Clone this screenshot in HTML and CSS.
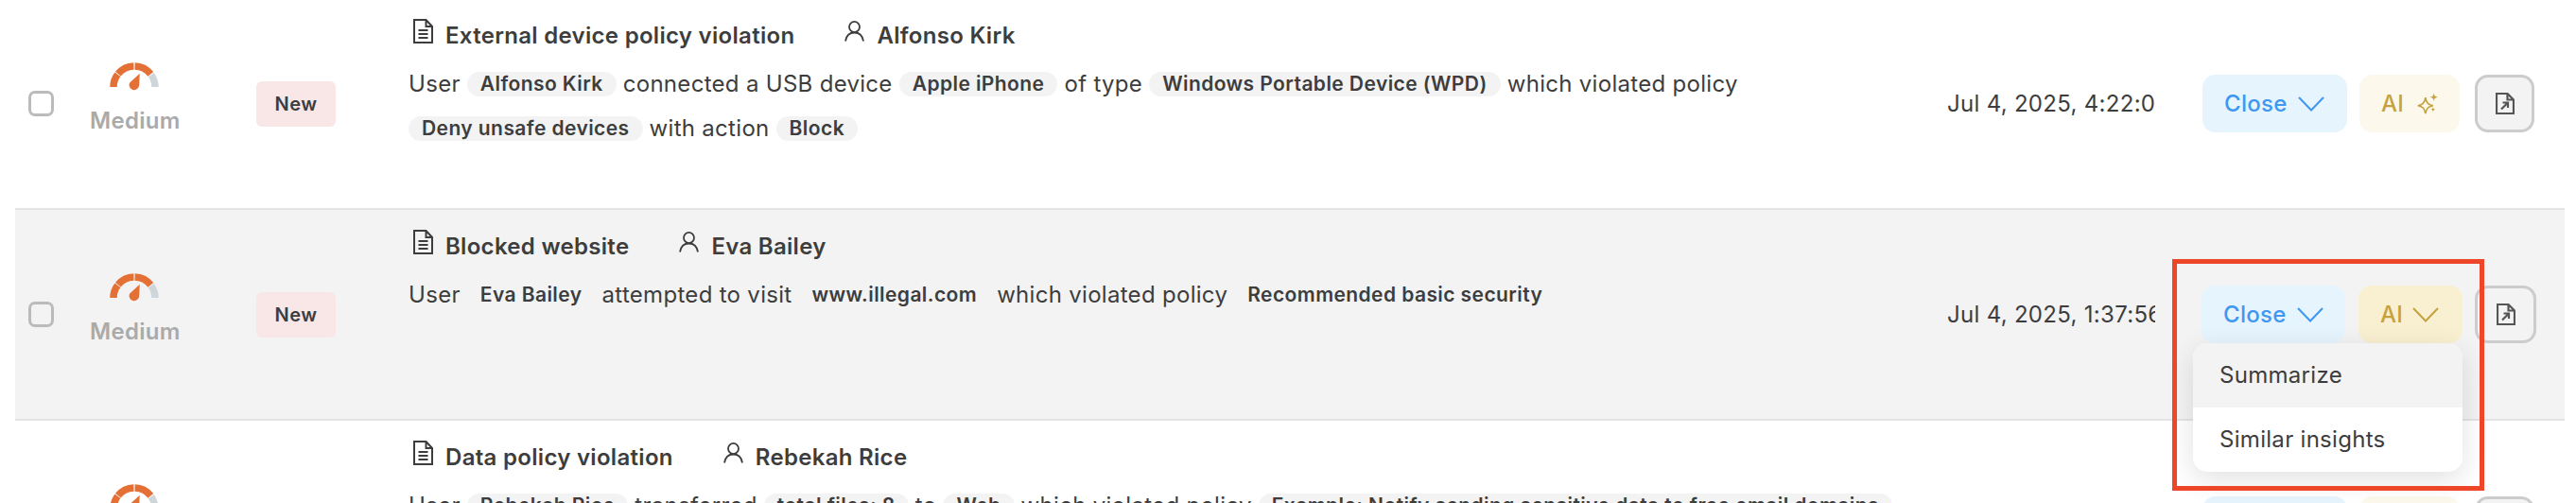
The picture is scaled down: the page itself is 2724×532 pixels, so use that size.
FILE: index.html
```html
<!DOCTYPE html>
<html lang="en">
<head>
    <meta charset="UTF-8">
    <title>Insights</title>
    <link rel="stylesheet" href="styles.css">
</head>
<body>
    <svg class="icon-defs" width="0" height="0">
        <defs>
            <symbol id="gauge" viewBox="0 0 52 31">
                <g fill="none" stroke-width="7.5">
                    <path stroke="#e57035" d="M4 27A22 22 0 0 1 8.4 13.8"/>
                    <path stroke="#e57035" d="M8.9 13.2A22 22 0 0 1 25.4 5"/>
                    <path stroke="#e57035" d="M26.6 5A22 22 0 0 1 43.3 13.4"/>
                    <path stroke="#cfd6da" d="M43.8 14.1A22 22 0 0 1 48 27"/>
                </g>
                <path fill="#e57035" d="M31.7 12.7L31.2 25A5.3 5.3 0 1 1 21.2 22.4Z"/>
            </symbol>
            <symbol id="doc" viewBox="0 0 21 26">
                <path fill="none" stroke="#3d3d3d" stroke-width="2" d="M1 1H13.5L20 8V25H1ZM13.5 1V8H20M5.5 12H15.5M5.5 16H15.5M5.5 20H15.5"/>
            </symbol>
            <symbol id="person" viewBox="0 0 21 22">
                <g fill="none" stroke="#3d3d3d" stroke-width="1.8">
                    <ellipse cx="10.5" cy="6.5" rx="5.5" ry="5.6"/>
                    <path d="M1 21.5C2 15.5 5.5 12.5 10.5 12.5S19 15.5 20 21.5"/>
                </g>
            </symbol>
            <symbol id="chevron" viewBox="0 0 28 16">
                <path fill="none" stroke="currentColor" stroke-width="2" d="M1 1L14 14.5L27 1"/>
            </symbol>
            <symbol id="sparkle" viewBox="0 0 28 28">
                <path fill="none" stroke="#c6a23f" stroke-width="1.8" d="M11 7C12 13 14 15.500 20 16.500C14 17.500 12 20 11 26C10 20 8 17.500 2 16.500C8 15.500 10 13 11 7Z"/>
                <path fill="#c6a23f" d="M21 1.500C21.500 5 22.500 6 26 6.500C22.500 7 21.500 8 21 11.500C20.500 8 19.500 7 16 6.500C19.500 6 20.500 5 21 1.500Z"/>
                <path fill="#c6a23f" d="M20 18C20.300 20 21 20.700 23 21C21 21.300 20.300 22 20 24C19.700 22 19 21.300 17 21C19 20.700 19.700 20 20 18Z"/>
            </symbol>
            <symbol id="export" viewBox="0 0 20 23">
                <path fill="none" stroke="#555" stroke-width="2.2" d="M1 1H12.500L19 7.500V22H1ZM12.500 1V7.500H19"/>
                <path fill="none" stroke="#555" stroke-width="2.2" d="M6 17.500L13 10.500M7.500 10.500H13V16"/>
            </symbol>
        </defs>
    </svg>

    <div class="insight-list">

        <div class="insight-row">
            <span class="check"></span>
            <div class="severity">
                <svg class="gauge"><use href="#gauge"/></svg>
                <span>Medium</span>
            </div>
            <span class="status">New</span>
            <div class="content">
                <div class="title-line">
                    <svg class="doc-icon"><use href="#doc"/></svg>
                    <b class="title">External device policy violation</b>
                    <svg class="person-icon"><use href="#person"/></svg>
                    <b class="title">Alfonso Kirk</b>
                </div>
                <p class="desc">User <span class="chip">Alfonso Kirk</span> connected a USB device <span class="chip">Apple iPhone</span> of type <span class="chip">Windows Portable Device (WPD)</span> which violated policy <span class="chip">Deny unsafe devices</span> with action <span class="chip">Block</span></p>
            </div>
            <div class="date"><span>Jul 4, 2025, 4:22:06 PM</span></div>
            <div class="actions">
                <button class="btn btn-close">Close <svg class="chevron"><use href="#chevron"/></svg></button>
                <button class="btn btn-ai">AI <svg class="sparkle"><use href="#sparkle"/></svg></button>
                <button class="btn btn-export"><svg class="export-icon"><use href="#export"/></svg></button>
            </div>
        </div>

        <div class="insight-row row-open">
            <span class="check"></span>
            <div class="severity">
                <svg class="gauge"><use href="#gauge"/></svg>
                <span>Medium</span>
            </div>
            <span class="status">New</span>
            <div class="content">
                <div class="title-line">
                    <svg class="doc-icon"><use href="#doc"/></svg>
                    <b class="title">Blocked website</b>
                    <svg class="person-icon"><use href="#person"/></svg>
                    <b class="title">Eva Bailey</b>
                </div>
                <p class="desc">User <span class="chip">Eva Bailey</span> attempted to visit <span class="chip">www.illegal.com</span> which violated policy <span class="chip">Recommended basic security</span></p>
            </div>
            <div class="date"><span>Jul 4, 2025, 1:37:56 PM</span></div>
            <div class="actions">
                <button class="btn btn-close">Close <svg class="chevron"><use href="#chevron"/></svg></button>
                <button class="btn btn-ai">AI <svg class="chevron"><use href="#chevron"/></svg></button>
                <button class="btn btn-export"><svg class="export-icon"><use href="#export"/></svg></button>
                <div class="ai-menu">
                    <div class="ai-menu-item active">Summarize</div>
                    <div class="ai-menu-item">Similar insights</div>
                </div>
                <div class="callout"></div>
            </div>
        </div>

        <div class="insight-row">
            <span class="check"></span>
            <div class="severity">
                <svg class="gauge"><use href="#gauge"/></svg>
                <span>Medium</span>
            </div>
            <span class="status">New</span>
            <div class="content">
                <div class="title-line">
                    <svg class="doc-icon"><use href="#doc"/></svg>
                    <b class="title">Data policy violation</b>
                    <svg class="person-icon"><use href="#person"/></svg>
                    <b class="title">Rebekah Rice</b>
                </div>
                <p class="desc">User <span class="chip">Rebekah Rice</span> transferred <span class="chip">total files: 8</span> to <span class="chip">Web</span> which violated policy <span class="chip">Example: Notify sending sensitive data to free email domains</span></p>
            </div>
            <div class="date"><span>Jul 4, 2025, 1:12:40 PM</span></div>
            <div class="actions">
                <button class="btn btn-close">Close <svg class="chevron"><use href="#chevron"/></svg></button>
                <button class="btn btn-ai">AI <svg class="sparkle"><use href="#sparkle"/></svg></button>
                <button class="btn btn-export"><svg class="export-icon"><use href="#export"/></svg></button>
            </div>
        </div>

    </div>
</body>
</html>
```
FILE: styles.css
```css
html, body {
    margin: 0;
    padding: 0;
    height: 532px;
    overflow: hidden;
    background-color: #fff;
}

body {
    font-family: 'Inter', sans-serif;
    font-size: 24px;
    letter-spacing: 0.3px;
    color: #3d3d3d;
}

.icon-defs {
    position: absolute;
}

/* list starts a pixel above the visible area */
.insight-list {
    margin: -1px 12px 0 16px;
}

.insight-row {
    display: flex;
    align-items: center;
    height: 221px;
    padding: 0 32px 0 14px;
    border-bottom: 2px solid #e4e4e4;
}

.row-open {
    padding-right: 30px;
    background-color: #f3f3f3;
}

.check {
    flex: none;
    box-sizing: border-box;
    width: 27px;
    height: 27px;
    border: 3px solid #bbb;
    border-radius: 7px;
}

.severity {
    flex: none;
    width: 93px;
    margin-left: 38px;
    padding-bottom: 12px;
    text-align: center;
    font-size: 24px;
    line-height: 29px;
    font-weight: 600;
    color: #aaa;
}

.severity span {
    display: block;
    margin-top: 17px;
}

.gauge {
    display: block;
    width: 52px;
    height: 31px;
    margin: 0 auto;
}

.status {
    flex: none;
    width: 84px;
    height: 48px;
    margin-left: 83px;
    line-height: 48px;
    text-align: center;
    font-size: 20px;
    font-weight: 600;
    letter-spacing: 0.5px;
    background-color: #f9e6e7;
    border-radius: 6px;
}

.content {
    flex: 1;
    align-self: flex-start;
    min-width: 0;
    margin-left: 77px;
    padding-top: 21px;
}

.title-line {
    display: flex;
    align-items: flex-start;
    height: 45px;
}

.doc-icon {
    flex: none;
    width: 21px;
    height: 26px;
    margin-left: 5px;
}

.person-icon {
    flex: none;
    width: 21px;
    height: 22px;
    margin: 2px 0 0 53px;
}

.title {
    margin-left: 13px;
    padding-top: 3px;
    line-height: 29px;
    font-size: 24px;
    font-weight: 600;
}

.desc {
    margin: 0;
    line-height: 47px;
    font-size: 24px;
}

.chip {
    display: inline-block;
    height: 26px;
    padding: 0 14px;
    line-height: 26px;
    font-size: 21px;
    font-weight: 600;
    letter-spacing: 0.42px;
    background-color: #f3f3f3;
    border-radius: 13px;
    vertical-align: 1px;
}

.date {
    flex: none;
    width: 220px;
    overflow: hidden;
    white-space: nowrap;
}

.actions {
    position: relative;
    flex: none;
    display: flex;
    gap: 13px;
    margin-left: 50px;
}

.row-open .actions {
    margin-left: 49px;
}

.btn {
    display: flex;
    align-items: center;
    justify-content: flex-start;
    box-sizing: border-box;
    height: 61px;
    padding: 0 0 0 23px;
    border: none;
    border-radius: 14px;
    font-family: inherit;
    font-size: 24px;
    font-weight: 500;
    letter-spacing: 0.3px;
}

.btn-close {
    width: 153px;
    gap: 11px;
    color: #3f97f2;
    background-color: #e6f4fd;
}

.btn-ai {
    width: 106px;
    gap: 13px;
    color: #c6a23f;
    background-color: #fcf9ec;
}

.row-open .btn-close {
    width: 152px;
}

.row-open .btn-ai {
    width: 110px;
    margin-left: 1px;
    gap: 10px;
    background-color: #f8f0d0;
}

.btn-export {
    justify-content: center;
    width: 63px;
    margin-left: 3px;
    padding: 0;
    background-color: #f3f3f3;
    border: 3px solid #ccc;
}

.row-open .btn-export {
    width: 65px;
    margin-left: 0;
    background-color: transparent;
}

.chevron {
    width: 28px;
    height: 16px;
}

.sparkle {
    width: 25px;
    height: 25px;
}

.export-icon {
    width: 20px;
    height: 23px;
}

/* dropdown under the AI button */
.ai-menu {
    position: absolute;
    top: 61px;
    left: -9px;
    z-index: 2;
    width: 285px;
    overflow: hidden;
    background-color: #fff;
    border-radius: 15px;
    box-shadow: 0 8px 30px rgba(0, 0, 0, 0.12);
}

.ai-menu-item {
    height: 68px;
    padding-left: 28px;
    line-height: 68px;
}

.ai-menu-item.active {
    background-color: #f3f3f3;
}

/* red annotation box from the screenshot */
.callout {
    position: absolute;
    top: -28px;
    left: -31px;
    z-index: 3;
    box-sizing: border-box;
    width: 330px;
    height: 245px;
    border: 5px solid #ee4628;
}
```
